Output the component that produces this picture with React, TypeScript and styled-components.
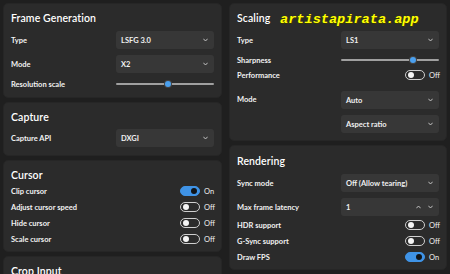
import React from "react";
import styled, { createGlobalStyle } from "styled-components";

const Global = createGlobalStyle`
  html, body { margin: 0; padding: 0; background: #1f1f1f; }
  body { font-family: "Lato", "Liberation Sans", sans-serif; color: #fff; }
  * { box-sizing: border-box; }
`;

const Page = styled.div`
  position: relative;
  width: 450px;
  height: 274px;
  overflow: hidden;
  display: grid;
  grid-template-columns: 219px 218px;
  column-gap: 7px;
  padding: 3px 3px 0 3px;
  background: #1f1f1f;
`;

const Column = styled.div`
  display: flex;
  flex-direction: column;
  gap: 4px;
`;

const Card = styled.section<{ $pb?: number; $pt?: number }>`
  background: #2b2b2b;
  border: 1px solid #262626;
  border-radius: 5px;
  padding: ${(p) => p.$pt ?? 6}px 7px ${(p) => p.$pb ?? 7}px 7px;
`;

const Heading = styled.h2<{ $mb?: number }>`
  margin: 0 0 ${(p) => p.$mb ?? 5}px 0;
  font-size: 10.5px;
  line-height: 16px;
  font-weight: 600;
  letter-spacing: 0.1px;
  color: #fff;
`;

const Rows = styled.div<{ $gap?: number }>`
  display: flex;
  flex-direction: column;
  gap: ${(p) => p.$gap ?? 6}px;
`;

const Row = styled.div<{ $h?: number; $mt?: number }>`
  display: flex;
  align-items: center;
  justify-content: space-between;
  height: ${(p) => p.$h ?? 18}px;
  margin-top: ${(p) => p.$mt ?? 0}px;
`;

const Label = styled.span`
  font-size: 7.5px;
  font-weight: 700;
  color: #f2f2f2;
  white-space: nowrap;
`;

const Select = styled.div`
  width: 98px;
  height: 18px;
  background: #373737;
  border-radius: 3px;
  display: flex;
  align-items: center;
  justify-content: space-between;
  padding: 0 6px 0 5px;
  font-size: 7.5px;
  font-weight: 700;
  color: #f0f0f0;
`;

const Stack = styled.div`
  display: flex;
  flex-direction: column;
  gap: 6px;
`;

const ModeRow = styled.div`
  display: flex;
  justify-content: space-between;
  align-items: flex-start;
  margin-top: 10px;
`;

const ModeLabel = styled(Label)`
  line-height: 18px;
`;

const Track = styled.div`
  position: relative;
  width: 98px;
  height: 2px;
  background: #a0a0a0;
  border-radius: 1px;
`;

const Thumb = styled.div`
  position: absolute;
  top: 50%;
  width: 8px;
  height: 8px;
  margin: -4px 0 0 -4px;
  border-radius: 50%;
  background: #454545;
  display: flex;
  align-items: center;
  justify-content: center;
  &::after {
    content: "";
    width: 6px;
    height: 6px;
    border-radius: 50%;
    background: #4aa0ef;
  }
`;

const ToggleWrap = styled.div`
  display: flex;
  align-items: center;
  gap: 4px;
`;

const Switch = styled.div<{ $on: boolean }>`
  width: 20px;
  height: 10px;
  border-radius: 5px;
  display: flex;
  align-items: center;
  padding: 0 2px;
  justify-content: ${(p) => (p.$on ? "flex-end" : "flex-start")};
  background: ${(p) => (p.$on ? "#3f93e6" : "transparent")};
  border: 1px solid ${(p) => (p.$on ? "#3f93e6" : "#cfcfcf")};
  &::after {
    content: "";
    width: 6px;
    height: 6px;
    border-radius: 50%;
    background: ${(p) => (p.$on ? "#101418" : "#f4f4f4")};
  }
`;

const State = styled.span`
  width: 10px;
  font-size: 7.5px;
  font-weight: 400;
  color: #f0f0f0;
  white-space: nowrap;
`;

const Spin = styled.div`
  display: flex;
  align-items: center;
  gap: 7px;
`;

const Watermark = styled.div`
  position: absolute;
  left: 280px;
  top: 12px;
  font-family: "Liberation Mono", monospace;
  font-style: italic;
  font-weight: 700;
  font-size: 13.6px;
  line-height: 16px;
  color: #ffff00;
  text-shadow: 1px 1px 0 #3a3a00;
`;

const Chevron = ({ up }: { up?: boolean }) => (
  <svg width="5" height="4" viewBox="0 0 5 4">
    <path
      d={up ? "M0.6 3 L2.5 1 L4.4 3" : "M0.6 1 L2.5 3 L4.4 1"}
      fill="none"
      stroke="#d0d0d0"
      strokeWidth="0.9"
      strokeLinecap="round"
    />
  </svg>
);

const Dropdown = ({ value }: { value: string }) => (
  <Select>
    <span>{value}</span>
    <Chevron />
  </Select>
);

const Slider = ({ pct }: { pct: number }) => (
  <Track>
    <Thumb style={{ left: `${pct}%` }} />
  </Track>
);

const Toggle = ({ on }: { on: boolean }) => (
  <ToggleWrap>
    <Switch $on={on} />
    <State>{on ? "On" : "Off"}</State>
  </ToggleWrap>
);

const ToggleRow = ({ label, on }: { label: string; on: boolean }) => (
  <Row $h={12}>
    <Label>{label}</Label>
    <Toggle on={on} />
  </Row>
);

export default function App() {
  return (
    <>
      <Global />
      <Page>
        <Column>
          <Card $pb={8}>
            <Heading>Frame Generation</Heading>
            <Rows>
              <Row>
                <Label>Type</Label>
                <Dropdown value="LSFG 3.0" />
              </Row>
              <Row>
                <Label>Mode</Label>
                <Dropdown value="X2" />
              </Row>
              <Row $h={10}>
                <Label>Resolution scale</Label>
                <Slider pct={53} />
              </Row>
            </Rows>
          </Card>
          <Card $pb={8}>
            <Heading $mb={4}>Capture</Heading>
            <Rows>
              <Row>
                <Label>Capture API</Label>
                <Dropdown value="DXGI" />
              </Row>
            </Rows>
          </Card>
          <Card $pb={6}>
            <Heading $mb={2}>Cursor</Heading>
            <Rows $gap={4}>
              <ToggleRow label="Clip cursor" on />
              <ToggleRow label="Adjust cursor speed" on={false} />
              <ToggleRow label="Hide cursor" on={false} />
              <ToggleRow label="Scale cursor" on={false} />
            </Rows>
          </Card>
          <Card>
            <Heading>Crop Input</Heading>
          </Card>
        </Column>
        <Column>
          <Card $pb={7}>
            <Heading>Scaling</Heading>
            <Rows $gap={0}>
              <Row>
                <Label>Type</Label>
                <Dropdown value="LS1" />
              </Row>
              <Row $h={10} $mt={6}>
                <Label>Sharpness</Label>
                <Slider pct={73} />
              </Row>
              <Row $h={12} $mt={4}>
                <Label>Performance</Label>
                <Toggle on={false} />
              </Row>
              <ModeRow>
                <ModeLabel>Mode</ModeLabel>
                <Stack>
                  <Dropdown value="Auto" />
                  <Dropdown value="Aspect ratio" />
                </Stack>
              </ModeRow>
            </Rows>
          </Card>
          <Card $pt={7} $pb={6}>
            <Heading $mb={5}>Rendering</Heading>
            <Rows $gap={0}>
              <Row>
                <Label>Sync mode</Label>
                <Dropdown value="Off (Allow tearing)" />
              </Row>
              <Row $mt={6}>
                <Label>Max frame latency</Label>
                <Select>
                  <span>1</span>
                  <Spin>
                    <Chevron up />
                    <Chevron />
                  </Spin>
                </Select>
              </Row>
              <Row $h={12} $mt={3}>
                <Label>HDR support</Label>
                <Toggle on={false} />
              </Row>
              <Row $h={12} $mt={4}>
                <Label>G-Sync support</Label>
                <Toggle on={false} />
              </Row>
              <Row $h={12} $mt={4}>
                <Label>Draw FPS</Label>
                <Toggle on />
              </Row>
            </Rows>
          </Card>
        </Column>
        <Watermark>artistapirata.app</Watermark>
      </Page>
    </>
  );
}
